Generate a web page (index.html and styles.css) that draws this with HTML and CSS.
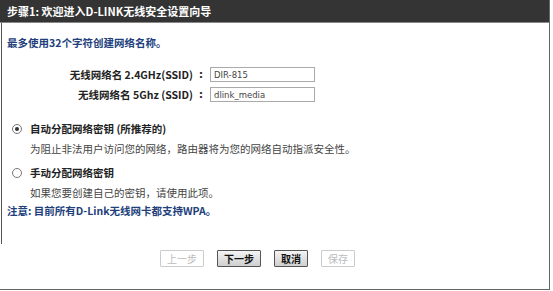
FILE: index.html
```html
<!DOCTYPE html>
<html lang="zh-CN">
<head>
<meta charset="UTF-8">
<title>无线安全设置向导</title>
<link rel="stylesheet" href="styles.css">
</head>
<body>

<div class="w_panel">
    <div class="w_header">步骤1: 欢迎进入D-LINK无线安全设置向导</div>

    <div class="w_body">
        <p class="w_note">最多使用32个字符创建网络名称。</p>

        <div class="w_fields">
            <div class="w_row">
                <span class="w_label">无线网络名 2.4GHz(SSID)</span>
                <span class="w_colon">:</span>
                <input type="text" class="w_input" value="DIR-815">
            </div>
            <div class="w_row">
                <span class="w_label">无线网络名 5Ghz (SSID)</span>
                <span class="w_colon">:</span>
                <input type="text" class="w_input" value="dlink_media">
            </div>
        </div>

        <div class="w_option">
            <label class="w_opt-title"><input type="radio" name="keyMode" class="w_radio" checked>自动分配网络密钥 (所推荐的)</label>
            <div class="w_opt-desc">为阻止非法用户访问您的网络，路由器将为您的网络自动指派安全性。</div>
        </div>

        <div class="w_option">
            <label class="w_opt-title"><input type="radio" name="keyMode" class="w_radio">手动分配网络密钥</label>
            <div class="w_opt-desc">如果您要创建自己的密钥，请使用此项。</div>
        </div>

        <p class="w_note w_note-last">注意: 目前所有D-Link无线网卡都支持WPA。</p>
    </div>

    <div class="w_footer">
        <button class="w_btn" disabled>上一步</button>
        <button class="w_btn w_btn-on">下一步</button>
        <button class="w_btn w_btn-on">取消</button>
        <button class="w_btn" disabled>保存</button>
    </div>
</div>

</body>
</html>
```

FILE: styles.css
```css
body {
    margin: 0;
    padding: 0;
    background: #fff;
    font-family: Tahoma, "DejaVu Sans", "Noto Sans CJK SC", sans-serif;
    color: #333;
}

.w_panel {
    width: 549px;
    height: 289px;
    border-right: 1px solid #666;
    border-bottom: 1px solid #666;
    display: flex;
    flex-direction: column;
}

.w_header {
    height: 22px;
    line-height: 23px;
    background-color: #333433;
    color: #fff;
    font-family: "Noto Sans CJK SC", sans-serif;
    font-size: 11px;
    font-weight: bold;
    padding-left: 7px;
    border-bottom: 1px solid #888;
}

.w_body {
    margin-left: 1px;
    border-left: 1px solid #555;
    height: 221px;
    padding-left: 5px;
}

.w_note {
    margin: 0;
    padding-top: 12px;
    color: #223f7c;
    font-family: "Noto Sans CJK SC", sans-serif;
    font-size: 10.5px;
    font-weight: bold;
}

.w_note-last {
    padding-top: 3px;
}

.w_fields {
    display: flex;
    flex-direction: column;
    gap: 5px;
    margin-top: 17px;
}

.w_row {
    display: flex;
    align-items: center;
    height: 15px;
}

.w_label {
    width: 186px;
    text-align: right;
    font-family: "Noto Sans CJK SC", sans-serif;
    font-size: 10.5px;
    font-weight: bold;
    color: #222;
}

.w_colon {
    width: 16px;
    text-align: center;
    font-weight: bold;
    font-size: 11px;
}

.w_input {
    width: 105px;
    height: 15px;
    box-sizing: border-box;
    margin: 0 0 0 1px;
    padding: 0 3px;
    border: 1px solid #aaa;
    font-family: "DejaVu Sans", sans-serif;
    font-size: 8.5px;
    color: #444;
}

.w_option {
    margin-top: 19px;
    padding-left: 5px;
}

.w_option + .w_option {
    margin-top: 9px;
}

.w_opt-title {
    display: flex;
    align-items: center;
    font-family: "Noto Sans CJK SC", sans-serif;
    font-size: 10.5px;
    font-weight: bold;
    color: #222;
}

.w_radio {
    appearance: none;
    width: 10px;
    height: 10px;
    margin: 0 8px 0 0;
    border: 1px solid #777;
    border-radius: 50%;
    background: #fff;
    box-sizing: border-box;
    display: flex;
    align-items: center;
    justify-content: center;
}

.w_radio:checked::after {
    content: "";
    width: 4px;
    height: 4px;
    border-radius: 50%;
    background: #333;
}

.w_opt-desc {
    padding-left: 18px;
    margin-top: 5px;
    font-family: "Noto Sans CJK SC", sans-serif;
    font-size: 10.5px;
    color: #444;
}

.w_footer {
    flex: 1;
    display: flex;
    justify-content: center;
    align-items: flex-start;
    gap: 13px;
    padding-top: 6px;
    padding-right: 34px;
}

.w_btn {
    height: 17px;
    padding: 0 6px;
    font-family: "Noto Sans CJK SC", sans-serif;
    font-size: 10px;
    background: #fff;
    color: #bbb;
    border: 1px solid #ccc;
    border-radius: 1px;
}

.w_btn-on {
    color: #111;
    font-weight: bold;
    background: linear-gradient(#f4f4f4, #cfcfcf);
    border: 1px solid #555;
}
```
